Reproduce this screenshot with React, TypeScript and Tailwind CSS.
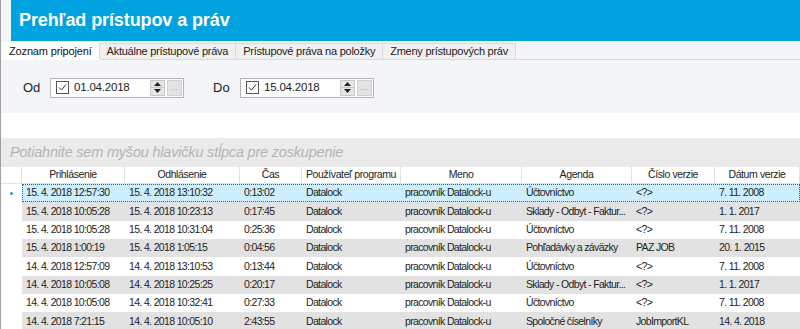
import React from "react";

const cols = [
  { title: "Prihlásenie", w: "w-[103px]" },
  { title: "Odhlásenie", w: "w-[115px]" },
  { title: "Čas", w: "w-[62px]" },
  { title: "Používateľ programu", w: "w-[99px]" },
  { title: "Meno", w: "w-[121px]" },
  { title: "Agenda", w: "w-[110px]" },
  { title: "Číslo verzie", w: "w-[83px]" },
  { title: "Dátum verzie", w: "flex-1" },
];

const rows = [
  ["15. 4. 2018 12:57:30", "15. 4. 2018 13:10:32", "0:13:02", "Datalock", "pracovník Datalock-u", "Účtovníctvo", "<?>", "7. 11. 2008"],
  ["15. 4. 2018 10:05:28", "15. 4. 2018 10:23:13", "0:17:45", "Datalock", "pracovník Datalock-u", "Sklady - Odbyt - Faktur...", "<?>", "1. 1. 2017"],
  ["15. 4. 2018 10:05:28", "15. 4. 2018 10:31:04", "0:25:36", "Datalock", "pracovník Datalock-u", "Účtovníctvo", "<?>", "7. 11. 2008"],
  ["15. 4. 2018 1:00:19", "15. 4. 2018 1:05:15", "0:04:56", "Datalock", "pracovník Datalock-u", "Pohľadávky a záväzky", "PAZ JOB", "20. 1. 2015"],
  ["14. 4. 2018 12:57:09", "14. 4. 2018 13:10:53", "0:13:44", "Datalock", "pracovník Datalock-u", "Účtovníctvo", "<?>", "7. 11. 2008"],
  ["14. 4. 2018 10:05:08", "14. 4. 2018 10:25:25", "0:20:17", "Datalock", "pracovník Datalock-u", "Sklady - Odbyt - Faktur...", "<?>", "1. 1. 2017"],
  ["14. 4. 2018 10:05:08", "14. 4. 2018 10:32:41", "0:27:33", "Datalock", "pracovník Datalock-u", "Účtovníctvo", "<?>", "7. 11. 2008"],
  ["14. 4. 2018 7:21:15", "14. 4. 2018 10:05:10", "2:43:55", "Datalock", "pracovník Datalock-u", "Spoločné číselníky", "JobImportKL", "14. 4. 2018"],
];

const tabs = ["Zoznam pripojení", "Aktuálne prístupové práva", "Prístupové práva na položky", "Zmeny prístupových práv"];

// Date field with checkbox, spinner and "..." button
const DateField = ({ value }: { value: string }) => (
  <div className="flex items-center h-[20px] w-[134px] border border-[#b4b4b4] bg-white pl-[5px] pr-[1px]">
    <div className="w-[13px] h-[13px] border border-[#555] flex items-center justify-center">
      <svg width="9" height="9" viewBox="0 0 9 9">
        <path d="M1 4.5 L3.5 7 L8 1.5" stroke="#333" strokeWidth="1" fill="none" />
      </svg>
    </div>
    <span className="ml-[5px] flex-1 text-[11.5px] tracking-[-0.2px] text-[#222]">{value}</span>
    <div className="flex flex-col w-[15px] h-[16px] border border-[#c8c8c8] bg-[#e6e6e6]">
      <div className="flex-1 flex items-center justify-center border-b border-[#c8c8c8]">
        <svg width="7" height="4" viewBox="0 0 7 4"><path d="M0 4 L3.5 0 L7 4 Z" fill="#222" /></svg>
      </div>
      <div className="flex-1 flex items-center justify-center">
        <svg width="7" height="4" viewBox="0 0 7 4"><path d="M0 0 L3.5 4 L7 0 Z" fill="#222" /></svg>
      </div>
    </div>
    <div className="ml-[2px] w-[15px] h-[16px] border border-[#d0d0d0] bg-[#e3e3e3] flex items-end justify-center pb-[3px]">
      <span className="text-[8px] leading-none text-[#999] tracking-[0.5px]">...</span>
    </div>
  </div>
);

export default function App() {
  return (
    <div
      className="w-[800px] h-[329px] overflow-hidden bg-[#f3f5f9] border-l border-[#a0a0a0] flex flex-col"
      style={{ fontFamily: '"Liberation Sans", Arial, sans-serif' }}
    >
      {/* Title bar */}
      <div className="h-[42px] shrink-0 pl-[10px]">
        <div className="h-[41px] bg-[#00a3e0] flex items-center pl-[8px]">
          <h1 className="text-white font-bold text-[18px] tracking-[-0.1px]">Prehľad prístupov a práv</h1>
        </div>
      </div>

      {/* Tabs */}
      <div className="h-[18px] shrink-0 flex items-end border-b border-[#dadada]">
        {tabs.map((t, i) =>
          i === 0 ? (
            <div key={t} className="h-[18px] px-[8px] bg-white text-[11px] tracking-[-0.15px] text-[#111] flex items-center -mb-px">{t}</div>
          ) : (
            <div key={t} className="h-[16px] px-[7px] bg-[#f0f0f0] border border-b-0 border-[#d9d9d9] -ml-px text-[11px] tracking-[-0.25px] text-[#222] flex items-center">{t}</div>
          )
        )}
      </div>

      {/* Filter */}
      <div className="h-[53px] shrink-0 flex items-center pl-[22px] pt-[2px]">
        <span className="text-[13px] text-[#222] w-[27px]">Od</span>
        <DateField value="01.04.2018" />
        <span className="ml-[29px] text-[13px] text-[#222] w-[27px]">Do</span>
        <DateField value="15.04.2018" />
      </div>
      <div className="h-[25px] shrink-0 bg-white" />

      {/* Group panel */}
      <div className="h-[29px] shrink-0 bg-[#ebebeb] flex items-center pl-[9px]">
        <span className="italic text-[14.5px] text-[#b4b4b4] tracking-[-0.2px]">Potiahnite sem myšou hlavičku stĺpca pre zoskupenie</span>
      </div>

      {/* Grid */}
      <div className="flex-1 bg-white text-[10.5px] tracking-[-0.65px] text-[#222]">
        <div className="h-[17px] flex border-b border-[#e2e2e2] tracking-[-0.4px]">
          <div className="w-[21px] border-r border-[#e2e2e2]" />
          {cols.map((c) => (
            <div key={c.title} className={`${c.w} border-r border-[#e2e2e2] flex items-center justify-center`}>{c.title}</div>
          ))}
        </div>
        {rows.map((r, i) => {
          const bg = i === 0 ? "bg-[#cdeefc]" : i % 2 === 1 ? "bg-[#e2e2e2]" : "bg-white";
          return (
            <div key={i} className="h-[18.33px] flex">
              <div className="w-[21px] flex items-center justify-center">
                {i === 0 && <div className="w-[3px] h-[3px] rounded-full bg-[#2a8fd8]" />}
              </div>
              <div className={`flex-1 flex ${bg} ${i === 0 ? "outline-1 outline-dotted outline-[#555] -outline-offset-1" : ""}`}>
                {r.map((v, j) => (
                  <div key={j} className={`${cols[j].w} flex items-center pl-[4px] whitespace-nowrap overflow-hidden`}>{v}</div>
                ))}
              </div>
            </div>
          );
        })}
      </div>
    </div>
  );
}
